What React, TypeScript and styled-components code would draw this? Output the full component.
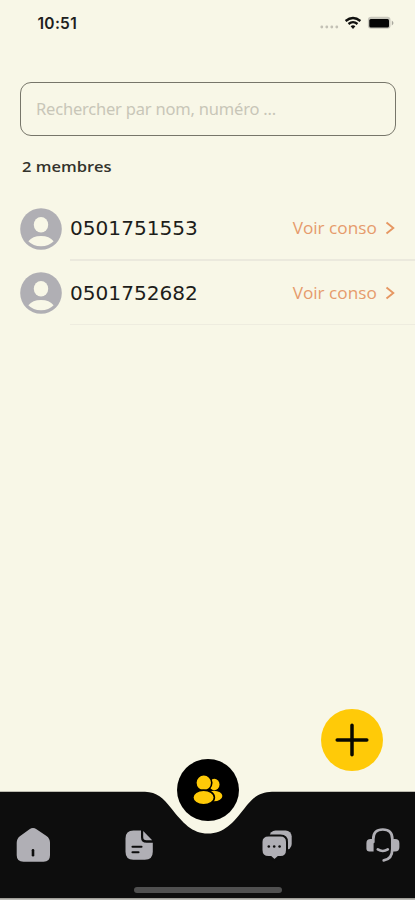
import React from 'react';
import styled, { createGlobalStyle } from 'styled-components';

const GlobalStyle = createGlobalStyle`
  * { box-sizing: border-box; }
  body { margin: 0; background: #f8f7e7; }
`;

const Screen = styled.div`
  width: 415px;
  height: 900px;
  display: flex;
  flex-direction: column;
  overflow: hidden;
  background: #f8f7e7;
  font-family: 'Noto Sans', 'Open Sans', sans-serif;
`;

const StatusBar = styled.header`
  height: 46px;
  flex: none;
  display: flex;
  align-items: center;
  justify-content: space-between;
  padding: 0 20px 0 37.5px;
`;

const Clock = styled.span`
  font: 600 15.5px/20px Inter, sans-serif;
  letter-spacing: 0.3px;
  padding-top: 2px;
  color: #20201c;
`;

const SearchInput = styled.input`
  flex: none;
  height: 54px;
  margin: 36px 19px 0 20px;
  padding: 0 15px 1px;
  border: 1.4px solid #77766a;
  border-radius: 11px;
  background: transparent;
  outline: none;
  font: 400 16.5px/22px 'Noto Sans', sans-serif;
  letter-spacing: -0.2px;
  color: #222;
  &::placeholder { color: #c8c6b8; opacity: 1; }
`;

const Count = styled.h1`
  margin: 19px 0 0 22px;
  height: 22px;
  font: 600 15px/22px 'Open Sans', sans-serif;
  transform: scaleX(1.1);
  transform-origin: left;
  color: #33332c;
`;

const MemberList = styled.ul`
  list-style: none;
  margin: 20.5px 0 0;
  padding: 0;
  flex: 1;
`;

const MemberRow = styled.li`
  display: flex;
  align-items: center;
  height: 63.8px;
  padding-left: 20px;
`;

const MemberBody = styled.div<{ $faint: boolean }>`
  flex: 1;
  height: 64px;
  margin-left: 8px;
  padding: 0 20px 0 0;
  display: flex;
  align-items: center;
  justify-content: space-between;
  border-bottom: ${p => (p.$faint ? '1px solid #eeecdf' : '2px solid #ebe9dd')};
`;

const PhoneNumber = styled.span`
  font: 400 18.8px/24px 'DejaVu Sans', sans-serif;
  transform: translateY(1px) scaleX(1.07);
  transform-origin: left;
  color: #1d1d1a;
`;

const UsageLink = styled.a`
  display: flex;
  align-items: center;
  gap: 8px;
  color: #e69b6c;
`;

const UsageText = styled.span`
  font: 500 15.5px/22px 'Open Sans', sans-serif;
  transform: scaleX(1.11);
  transform-origin: right;
`;

const AddRow = styled.div`
  flex: none;
  display: flex;
  justify-content: flex-end;
  padding-right: 32px;
  height: 49px;
`;

const AddButton = styled.button`
  width: 62px;
  height: 62px;
  padding: 0;
  border: 0;
  border-radius: 50%;
  background: #ffca08;
`;

const TabBar = styled.nav`
  position: relative;
  flex: none;
  height: 142px;
`;

const TabBackground = styled.svg`
  position: absolute;
  inset: 0;
`;

const ActiveTab = styled.button`
  position: absolute;
  left: 177px;
  top: 1px;
  width: 62px;
  height: 62px;
  padding: 0;
  border: 0;
  border-radius: 50%;
  background: #000;
  display: grid;
  place-items: center;
`;

const Tabs = styled.div`
  position: relative;
  display: flex;
  justify-content: space-between;
  margin: 0 14px 0 15px;
  padding-top: 69px;
`;

const TabPair = styled.div`
  display: flex;
  gap: 70px;
`;

const HomeIndicator = styled.div`
  position: absolute;
  left: 134px;
  bottom: 7px;
  width: 148px;
  height: 6px;
  border-radius: 3px;
  background: #505050;
`;

const GREY = '#b0afb5';

const StatusIcons = () => (
  <svg width="76" height="16" viewBox="319 15 76 16">
    <g fill="#c3c1b5">
      <circle cx="321.8" cy="27" r="1.4" /><circle cx="326.8" cy="27" r="1.4" />
      <circle cx="331.8" cy="27" r="1.4" /><circle cx="336.8" cy="27" r="1.4" />
    </g>
    <g fill="none" stroke="#11110f" strokeWidth="2.3">
      <path d="M345.6 21q7.4-6.1 14.8 0" />
      <path d="M348.5 24q4.5-3.8 9 0" />
    </g>
    <path d="M350.6 26.3q2.4-2 4.8 0l-2.4 2.6z" fill="#11110f" />
    <rect x="367.9" y="16.8" width="22.6" height="12" rx="3.2" fill="#c9c8bd" />
    <rect x="369.3" y="19" width="19.7" height="8.4" rx="1.5" fill="#050505" />
    <path d="M391.8 20.6q3.4 2.4 0 4.8z" fill="#aaa99f" />
  </svg>
);

const Avatar = () => (
  <svg width="42" height="42" viewBox="0 0 42 42">
    <circle cx="21" cy="21" r="20.8" fill="#b0afb4" />
    <ellipse cx="21" cy="16.7" rx="7.2" ry="7.8" fill="#f8f7e7" />
    <path d="M8.4 33.3Q12.5 28 21 28T33.6 33.3Q29 38.3 21 38.3T8.4 33.3Z" fill="#f8f7e7" />
  </svg>
);

const Chevron = () => (
  <svg width="10" height="14" viewBox="0 0 10 14" fill="none" stroke="#e69762" strokeWidth="1.9">
    <path d="M1.5 1.4 8.3 7l-6.8 5.6" />
  </svg>
);

const HomeIcon = () => (
  <svg width="36" height="36" viewBox="15 827 36 36">
    <path d="M29.5 829.3q3.5-2.4 7 0l10 6.8q3.5 2.4 3.5 6.7v12.5q0 6.5-6.5 6.5h-20q-6.8 0-6.8-6.5v-12.5q0-4.3 3.5-6.7z" fill={GREY} />
    <path d="M33 850.3v5" stroke="#0d0d0d" strokeWidth="2.6" strokeLinecap="round" />
  </svg>
);

const DocumentIcon = () => (
  <svg width="36" height="36" viewBox="121 827 36 36">
    <path d="M133.5 830.5h7.5v6.7q0 5.6 5.6 5.6h6.2v9q0 8-8 8h-11.5q-7.8 0-7.8-8v-13.3q0-8 8-8z" fill={GREY} />
    <path d="M143.2 831l9 9.3h-5.8q-3.2 0-3.2-3.2z" fill={GREY} />
    <path d="M132.5 846.8h9M132.5 852.2h6" stroke="#0d0d0d" strokeWidth="2.1" strokeLinecap="round" />
  </svg>
);

const ChatIcon = () => (
  <svg width="36" height="36" viewBox="259 827 36 36">
    <rect x="269.5" y="830.5" width="22.2" height="19.5" rx="6" fill={GREY} />
    <path d="M268.5 835.5h12q6.5 0 6.5 6.5v8q0 7-6.5 7h-2.3l-3.7 3.2-3.7-3.2h-2.3q-7 0-7-7v-8q0-6.5 7-6.5z" fill={GREY} stroke="#0d0d0d" strokeWidth="2" />
    <g fill="#0d0d0d"><circle cx="268.8" cy="846.5" r="1.3" /><circle cx="274.2" cy="846.5" r="1.3" /><circle cx="279.6" cy="846.5" r="1.3" /></g>
  </svg>
);

const HeadsetIcon = () => (
  <svg width="36" height="36" viewBox="365 827 36 36">
    <g fill="none" stroke={GREY} strokeWidth="2.7" strokeLinecap="round">
      <path d="M373.3 842v-3q0-9.5 9.5-9.5t9.5 9.5v10q0 10.3-8.6 11.3" />
      <path d="M377.8 849.4q5 3.2 10 0" />
    </g>
    <path d="M373.6 839v12.4h-4.2q-3 0-3-3v-5.2q0-4.2 4.2-4.2zM392 839h3q4.4 0 4.4 4.2v4q0 4.2-4.4 4.2h-3z" fill={GREY} />
  </svg>
);

const MembersIcon = () => (
  <svg width="30" height="30" viewBox="193 775 30 30">
    <g fill="#ffca08">
      <ellipse cx="214.3" cy="784.5" rx="5.2" ry="5.8" />
      <ellipse cx="213.8" cy="796" rx="8.6" ry="5.3" />
      <circle cx="203.8" cy="782.8" r="8" stroke="#000" strokeWidth="1.6" />
      <ellipse cx="203.6" cy="797.5" rx="10.8" ry="7.4" stroke="#000" strokeWidth="1.6" />
    </g>
  </svg>
);

const members = ['0501751553', '0501752682'];

export default function App() {
  return (
    <>
      <GlobalStyle />
      <Screen>
        <StatusBar><Clock>10:51</Clock><StatusIcons /></StatusBar>
        <SearchInput placeholder="Rechercher par nom, numéro ..." />
        <Count>2 membres</Count>
        <MemberList>
          {members.map((phone, i) => (
            <MemberRow key={phone}>
              <Avatar />
              <MemberBody $faint={i === members.length - 1}>
                <PhoneNumber>{phone}</PhoneNumber>
                <UsageLink><UsageText>Voir conso</UsageText><Chevron /></UsageLink>
              </MemberBody>
            </MemberRow>
          ))}
        </MemberList>
        <AddRow>
          <AddButton aria-label="Ajouter">
            <svg width="62" height="62" viewBox="0 0 62 62" stroke="#080800" strokeWidth="3.5" strokeLinecap="round">
              <path d="M31 16.2v29.6M16.2 31h29.6" />
            </svg>
          </AddButton>
        </AddRow>
        <TabBar>
          <TabBackground width="415" height="142" viewBox="0 758 415 142">
            <path d="M0 791.7H145C157 792 163 798 171 808C183 823 192 833.5 208 833.5S233 823 244 809C253 797 260 792 272 791.7H415V898.5H0Z" fill="#0d0d0d" />
            <path d="M0 899.2h415" stroke="#bcbcb7" strokeWidth="1.4" />
          </TabBackground>
          <ActiveTab aria-label="Membres"><MembersIcon /></ActiveTab>
          <Tabs>
            <TabPair><HomeIcon /><DocumentIcon /></TabPair>
            <TabPair><ChatIcon /><HeadsetIcon /></TabPair>
          </Tabs>
          <HomeIndicator />
        </TabBar>
      </Screen>
    </>
  );
}
